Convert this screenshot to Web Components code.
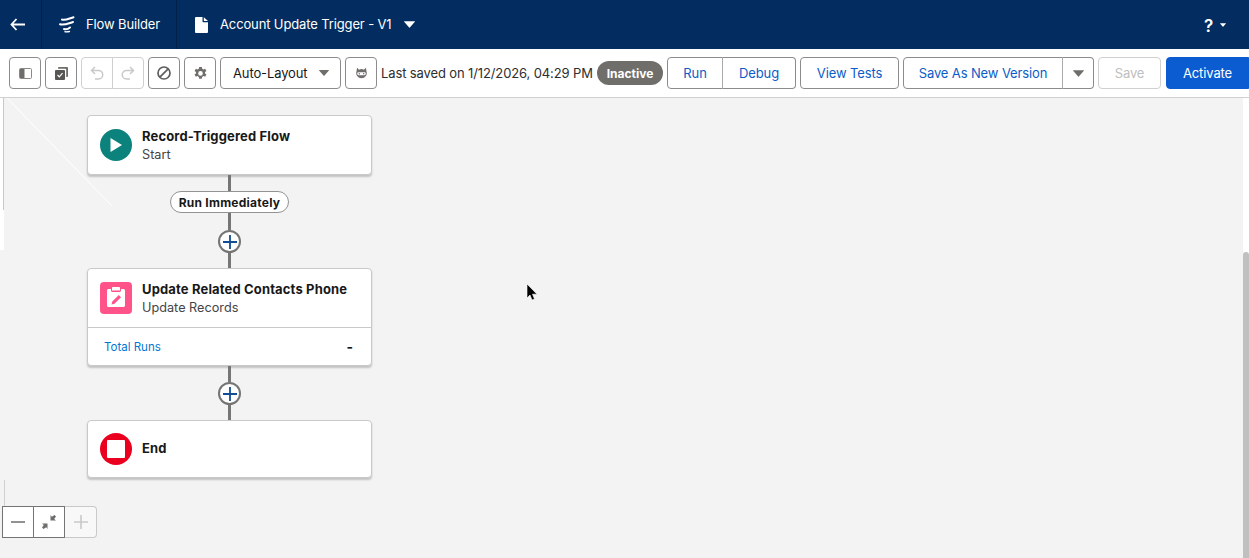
<!DOCTYPE html>
<html>
<head>
<meta charset="utf-8">
<title>Flow Builder</title>
<style>
	html, body { margin: 0; height: 100%; overflow: hidden; }
	body { font-family: Inter, "Liberation Sans", sans-serif; font-size: 13px; color: #181818; background: #f3f3f3; }
</style>
</head>
<body>
<fb-app></fb-app>
<script>
(function() {
	const caret = (size, color) => `<svg width="${size}" height="${Math.round(size * 0.6)}" viewBox="0 0 10 6"><path d="M0.3 0h9.4a.3.3 0 0 1 .2.5L5.3 5.8a.4.4 0 0 1-.6 0L.1.5A.3.3 0 0 1 .3 0z" fill="${color}"/></svg>`;

	function define(name, html, setup) {
		const template = document.createElement("template");
		template.innerHTML = html;
		customElements.define(name, class extends HTMLElement {
			constructor() {
				super();
				this._shadowRoot = this.attachShadow({mode: "open"});
				this._shadowRoot.appendChild(template.content.cloneNode(true));
			}
			connectedCallback() {
				if (setup) setup.call(this, this._shadowRoot);
			}
		});
	}

	define("fb-header", `
		<style>
			:host { display: flex; height: 49px; background: #032d60; color: #fff; font-size: 13px; letter-spacing: -.13px; align-items: stretch; }
			.cell { display: flex; align-items: center; box-sizing: border-box; border-right: 1px solid #01204a; }
			.cell span { margin-bottom: 2px; }
			.back { width: 42px; padding-left: 10px; }
			.app { width: 135px; padding-left: 17px; gap: 11px; }
			.file { padding-left: 18px; gap: 12px; border: 0; }
			.help { margin-left: auto; padding-right: 23px; display: flex; align-items: center; gap: 7px; }
			.help b { font-size: 17px; font-weight: 600; line-height: 18px; padding-top: 3px; }
		</style>
		<div class="cell back">
			<svg width="15" height="13" viewBox="0 0 15 13"><path d="M6.500 1 1.500 6.500 6.500 12M1.800 6.500H15" fill="none" stroke="#fff" stroke-width="1.800"/></svg>
		</div>
		<div class="cell app">
			<svg width="16" height="17" viewBox="0 0 16 17"><g fill="none" stroke="#fff" stroke-width="2" stroke-linecap="round"><path d="M3 3.600C6 4.600 9.500 2.800 14.500 1.200"/><path d="M1 8.200C5 9.500 9 7.500 14 6"/><path d="M5 13C7.500 13.800 9.500 12.800 11 11.500"/><path d="M6 15.700C7.500 16 9 15.800 10.500 15.500" stroke-width="1.400"/></g></svg>
			<span>Flow Builder</span>
		</div>
		<div class="cell file">
			<svg width="13" height="16" viewBox="0 0 13 16"><path d="M1 0h6.500v4.200c0 .6.500 1.100 1.100 1.100H13V15a1 1 0 0 1-1 1H1a1 1 0 0 1-1-1V1a1 1 0 0 1 1-1zM8.800 .2 13 4H9.300a.5.500 0 0 1-.5-.5z" fill="#fff"/></svg>
			<span>Account Update Trigger - V1</span>
			${caret(11, "#fff")}
		</div>
		<div class="help">
			<b>?</b>
			${caret(6, "#fff")}
		</div>
	`);

	define("fb-btn", `
		<style>
			:host { display: inline-flex; align-items: center; justify-content: center; box-sizing: border-box; height: 32px; min-width: 32px; border: 1px solid #8c8c8c; border-radius: 4px; background: #fff; color: #0b5cc8; font-size: 13px; white-space: nowrap; }
			:host([disabled]) { border-color: #d0d0d0; color: #c0c0c0; }
			:host([brand]) { background: #0b5cd0; border-color: #0b5cd0; color: #fff; border-radius: 4px 0 0 4px; }
			:host([neutral]) { color: #181818; }
		</style>
		<slot></slot>
	`);

	define("fb-group", `
		<style>
			:host { display: inline-flex; height: 32px; }
			::slotted(*) { border-radius: 0 !important; margin-left: -1px; }
			::slotted(:first-child) { border-radius: 4px 0 0 4px !important; margin-left: 0; }
			::slotted(:last-child) { border-radius: 0 4px 4px 0 !important; }
			::slotted(:not(:first-child):not([disabled])) { border-left-color: #aaa; }
		</style>
		<slot></slot>
	`);

	define("fb-toolbar", `
		<style>
			:host { display: flex; height: 48px; background: #fff; border-bottom: 1px solid #d0d0d0; align-items: center; padding-left: 9px; gap: 4px; letter-spacing: -.12px; }
			.saved { font-size: 13px; color: #2e2e2e; width: 212px; white-space: nowrap; }
			.badge { background: #706e6b; color: #fff; font-weight: 700; font-size: 12px; height: 24px; width: 66px; border-radius: 12px; display: flex; align-items: center; justify-content: center; letter-spacing: 0; }
			svg { display: block; }
		</style>
		<fb-btn style="width:32px">
			<svg width="13" height="11" viewBox="0 0 13 11"><rect x=".5" y=".5" width="12" height="10" rx="1" fill="#fff" stroke="#8a8886"/><path d="M1 1h4.500v9H1z" fill="#6f6d6a"/></svg>
		</fb-btn>
		<fb-btn style="width:32px">
			<svg width="13" height="13" viewBox="0 0 13 13"><path d="M4 0h8a1 1 0 0 1 1 1v8a1 1 0 0 1-1 1h-.8V3a1.200 1.200 0 0 0-1.200-1.200H3V1a1 1 0 0 1 1-1z" fill="#706e6b"/><rect y="3" width="10" height="10" rx="1" fill="#585654"/><path d="M2.500 8 4.300 9.800 7.500 6.200" fill="none" stroke="#fff" stroke-width="1.200"/></svg>
		</fb-btn>
		<fb-group style="width:63px">
			<fb-btn disabled style="width:32px">
				<svg width="14" height="14" viewBox="0 0 14 14"><path d="M5 1 1.500 4.500 5 8M2 4.500h6.500a4 4 0 0 1 0 8.500H5" fill="none" stroke="#c9c9c9" stroke-width="1.500"/></svg>
			</fb-btn>
			<fb-btn disabled style="width:32px">
				<svg width="14" height="14" viewBox="0 0 14 14"><path d="M9 1 12.500 4.500 9 8M12 4.500H5.500a4 4 0 0 0 0 8.500H9" fill="none" stroke="#c9c9c9" stroke-width="1.500"/></svg>
			</fb-btn>
		</fb-group>
		<fb-btn style="width:32px">
			<svg width="14" height="14" viewBox="0 0 14 14"><circle cx="7" cy="7" r="6" fill="none" stroke="#5f5e5c" stroke-width="1.700"/><path d="M2.800 11.200 11.200 2.800" stroke="#5f5e5c" stroke-width="1.700"/></svg>
		</fb-btn>
		<fb-btn style="width:32px">
			<svg width="13" height="13" viewBox="0 0 14 14"><path fill-rule="evenodd" d="M5.600 0h2.800l.4 1.900 1.400.7 1.800-.8 1.400 2.400-1.500 1.200v1.600l1.500 1.200-1.400 2.400-1.800-.8-1.400.9-.4 1.900H5.600l-.4-1.900-1.400-.9-1.800.8L.6 8.200l1.500-1.200V5.400L.6 4.200 2 1.800l1.800.8 1.400-.7zM7 4.400a2.500 2.500 0 1 0 0 5 2.500 2.500 0 0 0 0-5z" fill="#706e6b"/></svg>
		</fb-btn>
		<fb-btn neutral style="width:121px; justify-content:flex-start; padding-left:12px; gap:12px">
			<span>Auto-Layout</span>${caret(10, "#706e6b")}
		</fb-btn>
		<fb-btn style="width:32px">
			<svg width="13" height="13" viewBox="0 0 16 15"><path fill-rule="evenodd" d="M2.500.5 5 2.800a7 7 0 0 1 6 0L13.500.5l.6 4.200A6.500 6.500 0 1 1 1.900 4.700zM4.500 6A1.800 1.800 0 0 0 4.500 9.600h7A1.800 1.800 0 0 0 11.500 6z" fill="#706e6b"/><circle cx="5.300" cy="7.800" r=".9" fill="#706e6b"/><circle cx="10.700" cy="7.800" r=".9" fill="#706e6b"/></svg>
		</fb-btn>
		<span class="saved">Last saved on 1/12/2026, 04:29 PM</span>
		<span class="badge">Inactive</span>
		<fb-group>
			<fb-btn style="width:56px">Run</fb-btn>
			<fb-btn style="width:74px">Debug</fb-btn>
		</fb-group>
		<fb-btn style="width:99px">View Tests</fb-btn>
		<fb-group>
			<fb-btn style="width:160px">Save As New Version</fb-btn>
			<fb-btn style="width:32px">${caret(11, "#706e6b")}</fb-btn>
		</fb-group>
		<fb-btn disabled style="width:63px">Save</fb-btn>
		<fb-btn brand style="width:83px; margin-left:1px">Activate</fb-btn>
	`);

	define("fb-card", `
		<style>
			:host { display: block; width: 285px; box-sizing: border-box; background: #fff; border: 1px solid #c9c9c9; border-radius: 4px; box-shadow: 0 2px 2px rgba(0,0,0,.2); position: relative; }
			.top { display: flex; align-items: center; gap: 10px; padding: 0 12px; height: var(--top-height, 58px); box-sizing: border-box; }
			.icon { width: 32px; height: 32px; flex: none; }
			.title { font-weight: 700; font-size: 13px; line-height: 18px; color: #181818; white-space: nowrap; letter-spacing: .15px; }
			.sub { font-size: 12.700px; line-height: 18px; color: #444; margin-top: 1px; }
			.sub:empty { display: none; }
			::slotted([slot=foot]) { display: flex; justify-content: space-between; align-items: center; box-sizing: border-box; height: 38px; padding: 0 18px 0 16px; border-top: 1px solid #c9c9c9; font-size: 11.500px; color: #0176d3; }
		</style>
		<div class="top">
			<div class="icon"><slot name="icon"></slot></div>
			<div>
				<div class="title"></div>
				<div class="sub"></div>
			</div>
		</div>
		<slot name="foot"></slot>
	`, function(root) {
		root.querySelector(".title").textContent = this.getAttribute("label");
		root.querySelector(".sub").textContent = this.getAttribute("sub") || "";
		if (!this.getAttribute("sub")) root.querySelector(".title").style.marginBottom = "2px";
	});

	define("fb-line", `
		<style>
			:host { display: block; width: 3px; background: #767676; height: 16px; position: relative; }
		</style>
	`);

	define("fb-pill", `
		<style>
			:host { display: flex; align-items: center; justify-content: center; box-sizing: border-box; width: 119px; height: 22px; border: 1px solid #939393; border-radius: 11px; background: #fff; font-weight: 700; font-size: 12px; letter-spacing: .25px; color: #181818; position: relative; }
		</style>
		<slot></slot>
	`);

	define("fb-plus", `
		<style>
			:host { display: flex; align-items: center; justify-content: center; box-sizing: border-box; width: 23px; height: 23px; border: 2px solid #747474; border-radius: 50%; background: #fff; position: relative; }
		</style>
		<svg width="14" height="14" viewBox="0 0 14 14"><path d="M7 0v14M0 7h14" stroke="#114d94" stroke-width="1.800"/></svg>
	`);

	define("fb-zoom", `
		<style>
			:host { position: absolute; left: 3px; top: 408px; display: flex; height: 32px; }
			.b { width: 32px; box-sizing: border-box; display: flex; align-items: center; justify-content: center; background: #fff; border: 1px solid #747474; margin-left: -1px; }
			.b:first-child { margin-left: 0; border-radius: 4px 0 0 4px; }
			.b:last-child { border: 1px solid #c9c9c9; border-left: 0; border-radius: 0 4px 4px 0; margin-left: 0; background: #f8f8f8; }
		</style>
		<div class="b"><svg width="14" height="2" viewBox="0 0 14 2"><path d="M0 1h14" stroke="#706e6b" stroke-width="1.500"/></svg></div>
		<div class="b"><svg width="14" height="14" viewBox="0 0 14 14"><path d="M8.500 0 9.800 1.700 12.500 0 14 1.500 12.200 4 14 5.500H8.500zM5.500 14 4.200 12.300 1.500 14 0 12.500 1.800 10 0 8.500H5.500z" fill="#706e6b"/></svg></div>
		<div class="b"><svg width="14" height="14" viewBox="0 0 14 14"><path d="M7 0v14M0 7h14" stroke="#c9c9c9" stroke-width="1.600"/></svg></div>
	`);

	define("fb-canvas", `
		<style>
			:host { display: block; position: relative; height: 460px; overflow: hidden; background: #f3f3f3; }
			.col { display: flex; flex-direction: column; align-items: center; width: 285px; margin-left: 87px; padding-top: 17px; position: relative; }
			.track { position: absolute; right: 0; top: 0; bottom: 0; width: 6px; background: #fff; }
			.thumb { position: absolute; right: 0; top: 154px; bottom: 0; width: 6px; background: #c0c0c0; border-radius: 3px 3px 0 0; }
			.cursor { position: absolute; left: 526px; top: 186px; }
			.edge { position: absolute; left: 0; top: 0; width: 4px; height: 152px; background: #fff; }
			.edge i { position: absolute; right: 0; top: 0; width: 1px; height: 112px; background: #c8c8c8; }
			.tick { position: absolute; left: 4px; top: 382px; width: 1px; height: 26px; background: #d0d0d0; }
			.streak { position: absolute; left: 0; top: 0; }
		</style>
		<svg class="streak" width="400" height="130"><path d="M7 0 112 108" stroke="#fff" stroke-width="1" fill="none"/></svg>
		<div class="edge"><i></i></div>
		<div class="col"><slot></slot></div>
		<div class="track"><div class="thumb"></div></div>
		<div class="tick"></div>
		<slot name="over"></slot>
		<svg class="cursor" width="12" height="18" viewBox="0 0 12 18"><path d="M1 0v14l3-3 2 5 2.500-1-2-4.800H11z" fill="#000" stroke="#fff" stroke-width=".6"/></svg>
	`);

	define("fb-app", `
		<style>
			:host { display: block; width: 1249px; height: 558px; overflow: hidden; }
		</style>
		<fb-header></fb-header>
		<fb-toolbar></fb-toolbar>
		<fb-canvas>
			<fb-card label="Record-Triggered Flow" sub="Start">
				<svg slot="icon" width="32" height="32" viewBox="0 0 32 32"><circle cx="16" cy="16" r="16" fill="#0b827c"/><path d="M10.500 9v14L22 16z" fill="#fff"/></svg>
			</fb-card>
			<fb-line></fb-line>
			<fb-pill>Run Immediately</fb-pill>
			<fb-line style="height:17px"></fb-line>
			<fb-plus></fb-plus>
			<fb-line style="height:15px"></fb-line>
			<fb-card label="Update Related Contacts Phone" sub="Update Records">
				<svg slot="icon" width="32" height="32" viewBox="0 0 32 32"><rect width="32" height="32" rx="4" fill="#ff538a"/><path d="M8.500 7H11v1.500c0 .8.700 1.500 1.500 1.500h7c.8 0 1.500-.7 1.500-1.500V7h2.500c.8 0 1.500.7 1.500 1.500v15c0 .8-.7 1.500-1.500 1.500h-15C7.700 25 7 24.300 7 23.500v-15C7 7.700 7.700 7 8.500 7zM13 5h6c.6 0 1 .4 1 1v2.500h-8V6c0-.6.400-1 1-1z" fill="#fff"/><path d="M11.500 22.500l.8-3 6.500-6.500 2.200 2.200-6.500 6.500z" fill="#ff538a"/></svg>
				<div slot="foot"><span>Total Runs</span><b style="color:#181818;font-size:14px">-</b></div>
			</fb-card>
			<fb-line></fb-line>
			<fb-plus></fb-plus>
			<fb-line style="height:15px"></fb-line>
			<fb-card label="End" style="--top-height:56px">
				<svg slot="icon" width="32" height="32" viewBox="0 0 32 32"><circle cx="16" cy="16" r="16" fill="#ea001e"/><rect x="7" y="7" width="18" height="18" rx="1" fill="#fff"/></svg>
			</fb-card>
			<fb-zoom slot="over"></fb-zoom>
		</fb-canvas>
	`);
})();
</script>
</body>
</html>
